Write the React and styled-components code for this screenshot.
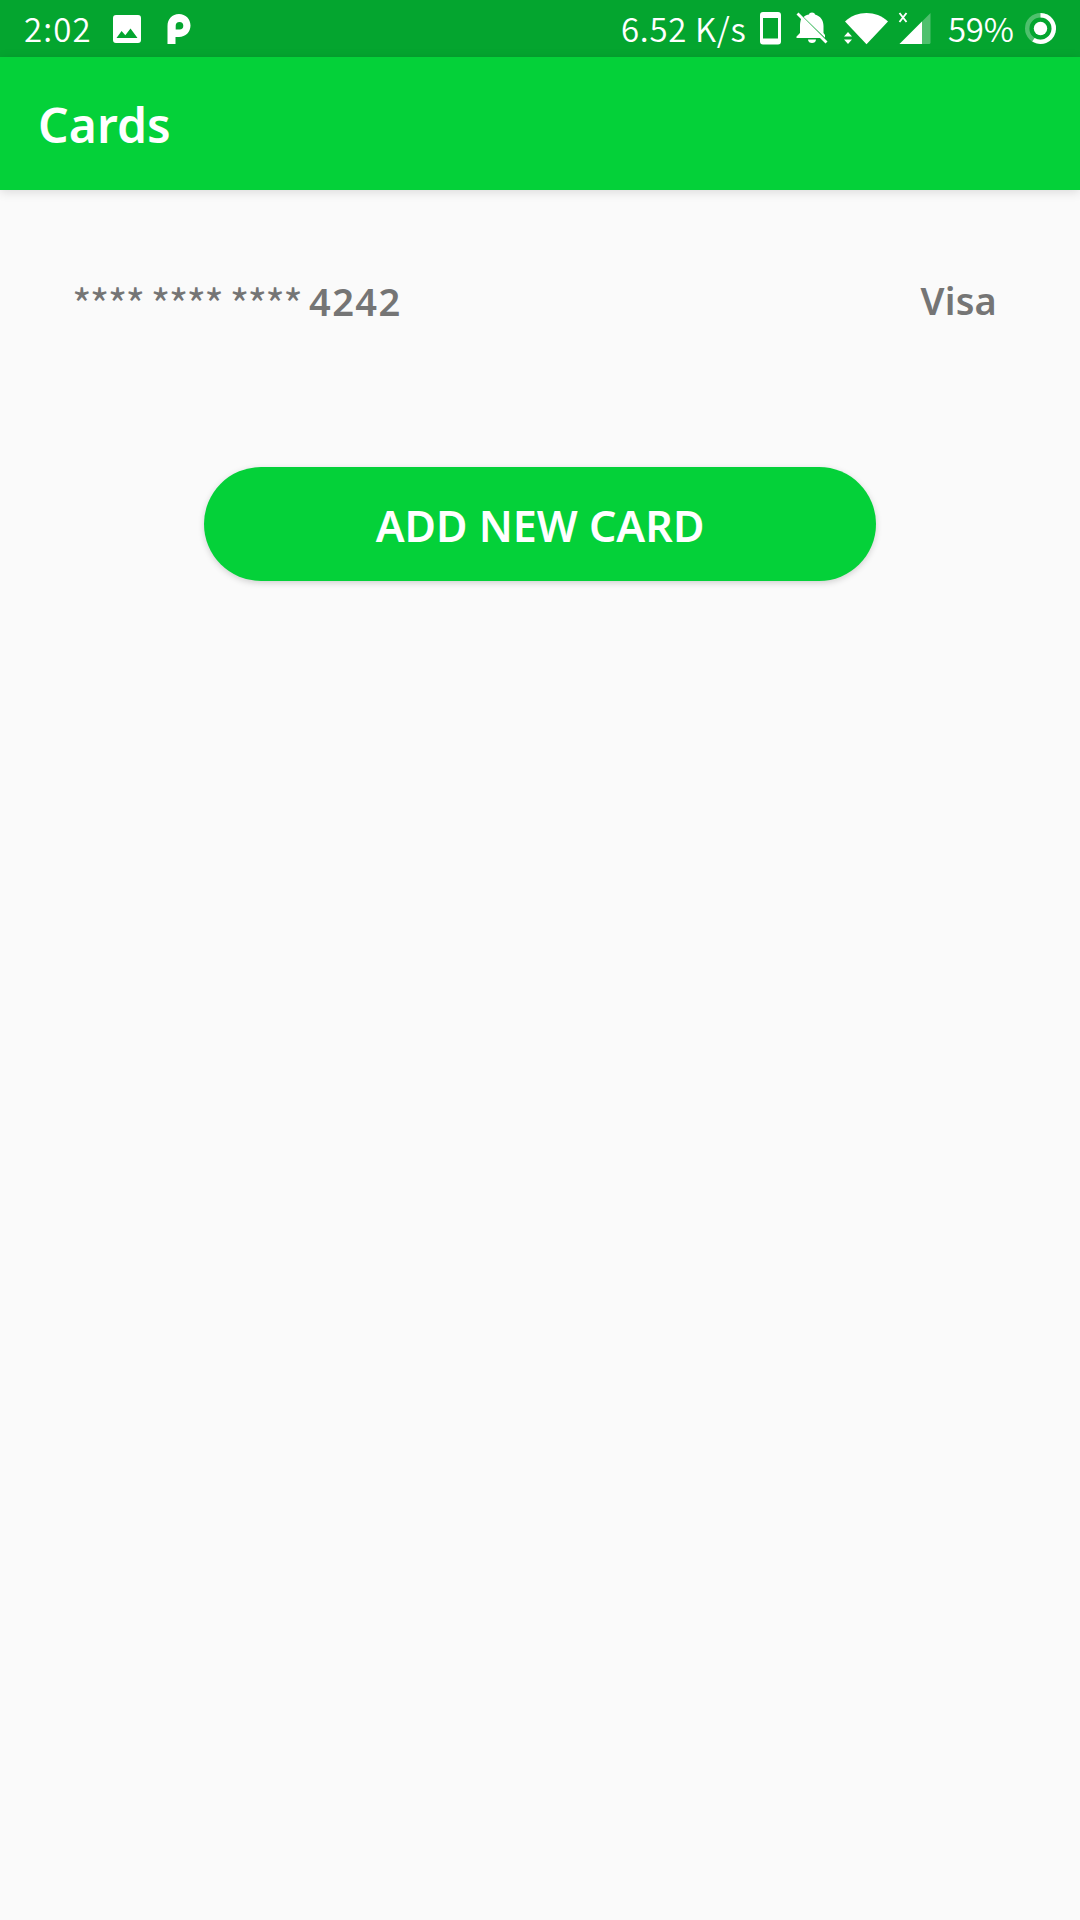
import React from "react";
import styled, { createGlobalStyle } from "styled-components";

const GlobalStyle = createGlobalStyle`
  * { box-sizing: border-box; }
  body { margin: 0; background: #fafafa; }
`;

const Screen = styled.div`
  width: 1080px;
  height: 1920px;
  display: flex;
  flex-direction: column;
  overflow: hidden;
  background: #fafafa;
  font-family: "Noto Sans", "Open Sans", sans-serif;
`;

const StatusBar = styled.header`
  flex: none;
  height: 57px;
  padding: 0 24px;
  display: flex;
  justify-content: space-between;
  align-items: center;
  background: #04a52f;
  color: #fff;
`;

const StatusGroup = styled.div`
  display: flex;
  align-items: center;
  height: 57px;
`;

const StatusText = styled.span`
  width: ${(p) => p.$width}px;
  margin-left: ${(p) => p.$gap || 0}px;
  font-family: "Noto Sans CJK SC", "Noto Sans", sans-serif;
  font-size: 33px;
  font-weight: 350;
  line-height: 57px;
  letter-spacing: ${(p) => p.$tracking || 0}px;
  white-space: nowrap;
`;

const Glyph = styled.svg`
  flex: none;
  display: block;
  width: ${(p) => p.$w}px;
  height: 57px;
  margin-left: ${(p) => p.$gap || 0}px;
  overflow: visible;
  fill: #fff;
`;

const AppBar = styled.div`
  flex: none;
  height: 133px;
  padding: 2px 38px 0;
  display: flex;
  align-items: center;
  background: #04d139;
  box-shadow: 0 2px 10px rgba(0, 0, 0, 0.13);
`;

const Title = styled.h1`
  margin: 0;
  color: #fff;
  font-size: 48px;
  font-weight: 600;
  line-height: 64px;
  letter-spacing: 0.1px;
`;

const Content = styled.main`
  flex: 1;
  display: flex;
  flex-direction: column;
  align-items: center;
`;

const CardRow = styled.div`
  width: 100%;
  height: 220px;
  padding: 0 83px 0 72px;
  display: flex;
  justify-content: space-between;
  align-items: center;
  color: #757575;
  font-size: 38px;
  font-weight: 600;
  line-height: 52px;
  white-space: nowrap;
`;

const CardNumber = styled.span`
  display: flex;
  align-items: baseline;
  padding-bottom: 2px;
`;

const Mask = styled.span`
  width: 237px;
  font-family: "Noto Sans CJK SC", "Noto Sans", sans-serif;
  font-size: 42px;
  font-weight: 400;
  letter-spacing: -1.8px;
  transform: translateY(5px);
`;

const Digits = styled.span`
  letter-spacing: 1.4px;
`;

const Brand = styled.span`
  letter-spacing: 0.2px;
`;

const AddButton = styled.button`
  width: 672px;
  height: 114px;
  margin: 57px 0 0;
  padding: 3px 0 0;
  border: 0;
  border-radius: 57px;
  background: #04d139;
  box-shadow: 0 2px 6px rgba(0, 0, 0, 0.17);
  color: #fff;
  font-family: inherit;
  font-size: 43px;
  font-weight: 600;
  line-height: 60px;
  letter-spacing: 0;
  white-space: nowrap;
`;

const ImageIcon = () => (
  <Glyph $w={28} viewBox="0 0 28 57">
    <path
      fillRule="evenodd"
      d="M3 15H25Q28 15 28 18V40Q28 43 25 43H3Q0 43 0 40V18Q0 15 3 15ZM3.5 38H24.5L17.5 28.5L12.3 35.2L8.6 31Z"
    />
  </Glyph>
);

const ParkingIcon = () => (
  <Glyph $w={24} $gap={26} viewBox="0 0 24 57">
    <path
      fillRule="evenodd"
      d="M0.5 44V26C0.5 19 5 14 12 14C18.600 14 23.500 19 23.500 25.500C23.500 32 18.600 37 12 37H8.500V44ZM8.700 29.500V25.700A3.800 3.800 0 1 1 12.500 29.500Z"
    />
  </Glyph>
);

const PhoneIcon = () => (
  <Glyph $w={21} viewBox="0 0 21 57">
    <path
      fillRule="evenodd"
      d="M3 12H18Q21 12 21 15V41.500Q21 44.500 18 44.500H3Q0 44.500 0 41.500V15Q0 12 3 12ZM3 18V38.500H18V18Z"
    />
  </Glyph>
);

const BellOffIcon = () => (
  <Glyph $w={32} $gap={15} viewBox="0 0 32 57">
    <path d="M0.500 38V36.500L4 33V26C4 23.500 4.300 21 5.500 17.500L26 38Z" />
    <path d="M7.600 17C9.200 15.600 11.200 14.800 13 14.500C13 11.800 19 11.800 19 14.500C24.500 16 27.500 20.300 27.500 26V33L29 35V37.800Z" />
    <path d="M12 39.500H20C20 44.300 12 44.300 12 39.500Z" />
    <path d="M1.500 13.500L30.500 42.500" fill="none" stroke="#fff" strokeWidth="2.8" />
  </Glyph>
);

const WifiIcon = () => (
  <Glyph $w={44} $gap={16} viewBox="0 0 44 57">
    <path d="M1 21.500C13 10.200 32 10.200 44 21.500L22.500 44.300Z" />
    <path d="M0 36.500L4 32L8 36.500ZM0 39.500H8L4 44Z" />
  </Glyph>
);

const SignalIcon = () => (
  <Glyph $w={32} $gap={11} viewBox="0 0 32 57">
    <path d="M0.500 44L31.500 13V42.500Q31.500 44 30 44Z" opacity="0.3" />
    <path d="M0.500 44L23 21.500V44Z" />
    <path d="M0.500 13L7.500 22M7.500 13L0.500 22" fill="none" stroke="#fff" strokeWidth="1.9" />
  </Glyph>
);

const BatteryIcon = () => (
  <Glyph $w={31} viewBox="0 0 31 57">
    <circle cx="15.500" cy="28.500" r="13.300" fill="none" stroke="#fff" strokeOpacity="0.3" strokeWidth="4.400" />
    <path d="M15.500 15.200A13.300 13.300 0 1 1 8.400 39.750" fill="none" stroke="#fff" strokeWidth="4.400" />
    <circle cx="15.500" cy="28.500" r="6.700" />
  </Glyph>
);

export default function App() {
  return (
    <>
      <GlobalStyle />
      <Screen>
        <StatusBar>
          <StatusGroup>
            <StatusText $width={89} $tracking={1.1}>2:02</StatusText>
            <ImageIcon />
            <ParkingIcon />
          </StatusGroup>
          <StatusGroup>
            <StatusText $width={139} $tracking={0.7}>6.52 K/s</StatusText>
            <PhoneIcon />
            <BellOffIcon />
            <WifiIcon />
            <SignalIcon />
            <StatusText $gap={17} $width={77} $tracking={-0.3}>59%</StatusText>
            <BatteryIcon />
          </StatusGroup>
        </StatusBar>
        <AppBar>
          <Title>Cards</Title>
        </AppBar>
        <Content>
          <CardRow>
            <CardNumber>
              <Mask>**** **** ****</Mask>
              <Digits>4242</Digits>
            </CardNumber>
            <Brand>Visa</Brand>
          </CardRow>
          <AddButton>ADD NEW CARD</AddButton>
        </Content>
      </Screen>
    </>
  );
}
